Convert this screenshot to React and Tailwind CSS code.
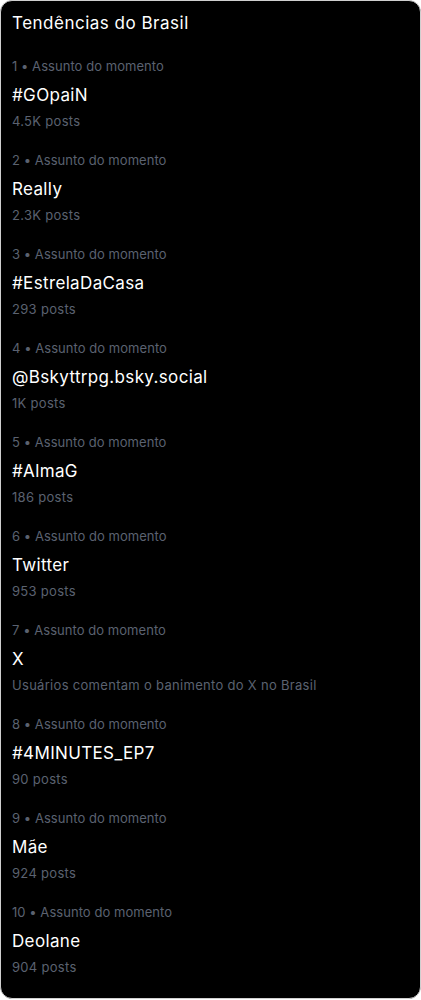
import React from "react";

const trends = [
  { title: "#GOpaiN", sub: "4.5K posts" },
  { title: "Really", sub: "2.3K posts" },
  { title: "#EstrelaDaCasa", sub: "293 posts" },
  { title: "@Bskyttrpg.bsky.social", sub: "1K posts" },
  { title: "#AlmaG", sub: "186 posts" },
  { title: "Twitter", sub: "953 posts" },
  { title: "X", sub: "Usuários comentam o banimento do X no Brasil" },
  { title: "#4MINUTES_EP7", sub: "90 posts" },
  { title: "Mãe", sub: "924 posts" },
  { title: "Deolane", sub: "904 posts" },
];

export default function App() {
  return (
    <div className="bg-white w-[421px] h-[1000px]" style={{ fontFamily: "Inter, 'Open Sans', sans-serif" }}>
      <div className="bg-black border border-[#cfcfcf] rounded-[12px] h-[999px] px-[11px] pt-[8px]">
        <div className="text-white text-[17px] leading-[28px] tracking-[0.5px]">Tendências do Brasil</div>
        {trends.map((t, i) => (
          <div key={i} className="flex flex-col pt-[19px]">
            <div className="text-[#5b6270] text-[13px] leading-[20px] tracking-[0.05px]">{i + 1} • Assunto do momento</div>
            <div className="mt-[5px] text-white text-[17px] leading-[28px] tracking-[0.35px]">{t.title}</div>
            <div className="mt-[2px] text-[#5b6270] text-[13px] leading-[20px] tracking-[0.3px]">{t.sub}</div>
          </div>
        ))}
      </div>
    </div>
  );
}
